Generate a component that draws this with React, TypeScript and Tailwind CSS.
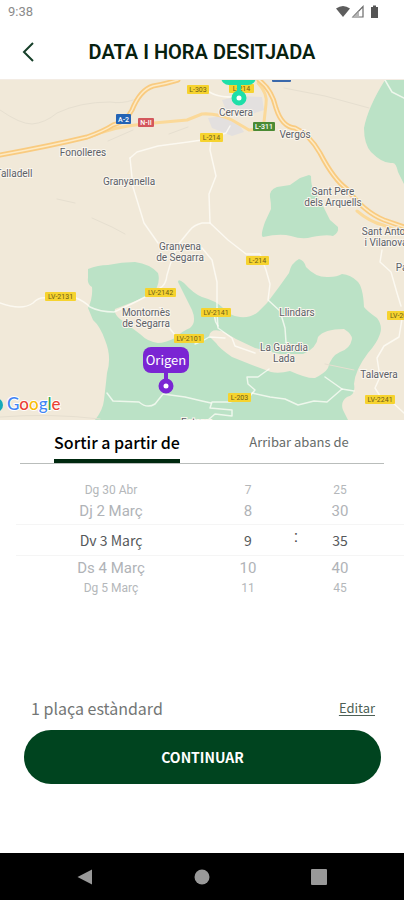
import React, { useState } from 'react';

const forests = [
    'M385 0 Q368 27 364 48 Q364 64 371 72 Q383 84 392 83 Q396 82 398 92 L404 104 V0 Z',
    'M309 95 L300 98 L290 105 L277 107 Q269 110 270 117 Q271 122 271 129 L265 142 Q260 156 263 157 Q280 153 291 156 Q303 160 312 157 Q327 154 333 156 Q339 153 338 147 L330 140 L324 128 L314 110 Q311 107 311 96 Z',
    'M88 189 Q98 185 108 185 Q122 182 135 182 Q150 184 158 193 Q160 200 157 207 Q155 214 147 216 L133 222 L115 229 Q114 234 120 239 L140 254 Q148 262 158 263 Q165 263 175 258 Q184 250 190 248 Q197 242 192 230 L178 202 Q178 198 184 203 Q194 214 202 217 Q216 221 222 227 Q229 236 240 237 Q251 238 258 232 L267 223 L279 207 L289 193 Q291 183 299 179 Q304 180 306 187 Q316 198 329 197 Q337 197 342 194 Q351 195 357 201 Q363 206 364 227 Q367 231 377 238 Q383 246 380 254 Q377 263 368 273 Q355 290 354 304 Q356 315 347 317 Q340 322 343 330 L348 340 H95 Q103 330 104 320 Q106 303 107 293 Q112 277 105 260 Q100 246 93 240 L88 228 Q93 218 92 207 Q87 204 88 198 Z',
];

const clearing =
    'M209 256 Q211 247 224 252 L236 259 L255 268 L280 274 L303 274 Q317 268 318 257 Q324 249 344 249 Q352 254 352 259 Q350 269 340 272 Q331 276 328 288 Q325 293 315 298 Q308 299 290 291 Q279 294 271 292 L252 285 L232 277 Q219 268 216 263 Z';

const minorRoads = [
    'M0 223 Q22 231 33 223 Q39 217 46 218 H76 Q84 221 90 227 Q100 232 114 232 Q132 224 145 217',
    'M160 208 Q166 205 167 195 L170 185 L177 166 L190 150 Q194 145 202 143 L210 143 L209 114 L216 96 L210 70 L211 60',
    'M210 143 L228 160 L246 174 H260 L266 190 L270 204 L268 220 L280 231 L285 248 L286 262',
    'M202 168 L212 180 L217 202 L217 232 L218 248 L232 258 L235 266 L255 273',
    'M217 228 Q212 238 218 246',
    'M175 255 L167 245 M195 264 Q205 260 209 257 L225 258',
    'M269 289 L258 297 L247 297 L248 304 L255 310 L250 316 L230 322 H212 L210 328 L232 330 L232 336 L215 334 L208 340',
    'M252 313 L270 317 L285 319 L298 325 L314 321 L327 322 L342 309 L354 311',
    'M342 309 L325 297 M107 313 L113 321 L139 322 Q147 329 155 324 L163 314 L185 317 L202 321 L211 323',
    'M382 170 L380 182 L391 192 L397 213 L401 226 M402 239 L399 257 L384 266 L377 278 L380 297 L375 308 L380 316 L392 322 L404 333',
    'M130 78 L137 72 L158 66 L188 62 L202 60 L226 53 L230 46',
    'M130 78 L133 107 L144 143 L158 163',
    'M205 8 Q212 17 232 17 M385 0 L392 12 L404 18',
];

const paths = [
    'M0 30 Q20 44 32 44 Q45 43 57 33 Q80 22 110 22 Q122 24 133 20',
    'M57 119 L75 123 M92 138 L112 147 L125 154',
    'M284 8 L325 16 L369 28 M169 54 L188 47',
    'M0 337 Q50 333 100 339 M325 284 L354 290',
    'M108 61 L133 50',
];

const motorways = [
    'M0 75 Q50 66 87 57 Q104 51 113 45 Q126 42 132 30 Q140 10 153 6 Q165 4 178 0',
    'M259 0 Q272 10 276 28 Q282 47 295 48 Q309 54 320 73 Q334 100 347 109 Q364 132 384 140 L404 147',
];

const trunkRoads = [
    'M90 57 Q112 47 143 44 L187 40 L202 34 Q217 33 232 40 L249 50 L264 49',
    'M258 3 Q268 14 266 24 L264 42',
    'M357 131 Q370 142 383 145 L404 153',
];

const roadSigns = [
    { x: 187, y: 5, w: 22, label: 'L-303' },
    { x: 229, y: 4, w: 25, label: 'L-214' },
    { x: 200, y: 53, w: 23, label: 'L-214' },
    { x: 246, y: 176, w: 23, label: 'L-214' },
    { x: 45, y: 212, w: 31, label: 'LV-2131' },
    { x: 145, y: 208, w: 31, label: 'LV-2142' },
    { x: 201, y: 228, w: 30, label: 'LV-2141' },
    { x: 174, y: 254, w: 30, label: 'LV-2101' },
    { x: 387, y: 231, w: 31, label: 'LV-2031' },
    { x: 228, y: 313, w: 23, label: 'L-203' },
    { x: 365, y: 315, w: 30, label: 'LV-2241' },
];

const places = [
    { x: 83, y: 76, lines: ['Fonolleres'] },
    { x: 14, y: 97, lines: ['Talladell'] },
    { x: 129, y: 105, lines: ['Granyanella'] },
    { x: 236, y: 36, lines: ['Cervera'] },
    { x: 295, y: 58, lines: ['Vergós'] },
    { x: 333, y: 115, lines: ['Sant Pere', 'dels Arquells'] },
    { x: 386, y: 155, lines: ['Sant Antolí', 'i Vilanova'] },
    { x: 180, y: 170, lines: ['Granyena', 'de Segarra'] },
    { x: 146, y: 236, lines: ['Montornès', 'de Segarra'] },
    { x: 297, y: 236, lines: ['Llindars'] },
    { x: 284, y: 271, lines: ['La Guàrdia', 'Lada'] },
    { x: 379, y: 298, lines: ['Talavera'] },
    { x: 415, y: 191, lines: ['Pallerols'] },
    { x: 196, y: 346, lines: ['Estany'] },
];

function RouteMap() {
    return (
        <section aria-label="Mapa" className="h-[340px] w-full bg-[#f1e9d9] border-t border-[#f3ece4] box-content overflow-hidden">
            <svg viewBox="0 0 404 340" preserveAspectRatio="xMidYMid slice" className="block w-full h-full" fontFamily="Roboto, sans-serif">
                <rect width="404" height="340" fill="#f1e9d9" />

                {/* Zona urbana */}
                <path d="M222 20 L238 16 L262 17 L264 30 L252 34 L240 30 L226 30 Z M208 38 L222 36 L238 43 L244 52 L232 56 L212 48 Z" fill="#e3e0df" />

                {/* Bosc */}
                {forests.map((d) => <path key={d} d={d} fill="#bbe2c6" />)}
                <path d={clearing} fill="#f1e9d9" />

                {/* Carreteres */}
                <g fill="none" strokeLinecap="round" strokeLinejoin="round">
                    {paths.map((d) => <path key={d} d={d} stroke="#e6dfd0" strokeWidth="1" />)}
                    {minorRoads.map((d) => <path key={d} d={d} stroke="#fffdf8" strokeWidth="1.5" strokeOpacity="0.75" />)}
                    {trunkRoads.map((d) => <path key={d} d={d} stroke="#fbd999" strokeWidth="3" />)}
                    {motorways.map((d) => (
                        <g key={d}>
                            <path d={d} stroke="#f9cb80" strokeWidth="5" />
                            <path d={d} stroke="#fdeac5" strokeWidth="1.5" />
                        </g>
                    ))}
                </g>

                {/* Senyals */}
                <g fontSize="7" textAnchor="middle">
                    {roadSigns.map((s) => (
                        <g key={`${s.x}-${s.y}`}>
                            <rect x={s.x} y={s.y} width={s.w} height="9" rx="1" fill="#f6d32f" />
                            <text x={s.x + s.w / 2} y={s.y + 7} fill="#6d5d18">{s.label}</text>
                        </g>
                    ))}
                    <g fill="#fff" fontWeight="500">
                        <rect x="116" y="34" width="15" height="10" rx="1" fill="#2463b4" />
                        <text x="123.5" y="42">A-2</text>
                        <rect x="138" y="38" width="16" height="9" rx="1" fill="#d3575c" />
                        <text x="146" y="45">N-II</text>
                        <rect x="253" y="42" width="22" height="9" rx="1" fill="#4a8a34" />
                        <text x="264" y="49">L-311</text>
                    </g>
                    <rect x="272" y="-8" width="19" height="10" rx="1" fill="#3a68ab" />
                </g>

                {/* Pobles */}
                <g fontSize="10" fill="#5c6067" stroke="#faf6ee" strokeWidth="2" paintOrder="stroke" textAnchor="middle">
                    {places.map((p) => (
                        <text key={p.lines[0]}>
                            {p.lines.map((line, i) => (
                                <tspan key={line} x={p.x} y={p.y + i * 11}>{line}</tspan>
                            ))}
                        </text>
                    ))}
                </g>

                {/* Destí */}
                <rect x="221" y="-22" width="35" height="27" rx="8" fill="#1ddfa8" />
                <rect x="237" y="3" width="4" height="12" fill="#1ddfa8" />
                <circle cx="239" cy="18" r="5" fill="#fff" stroke="#1ddfa8" strokeWidth="5" />

                {/* Origen */}
                <rect x="143" y="267" width="46" height="26" rx="8" fill="#7a25d3" />
                <path d="M166 292 V300" stroke="#7a25d3" strokeWidth="4" />
                <circle cx="166" cy="306" r="5" fill="#fff" stroke="#7a25d3" strokeWidth="5" />
                <text x="166" y="285" fontSize="13" fill="#fff" textAnchor="middle" fontFamily="'Noto Sans CJK SC', sans-serif">Origen</text>

                <circle cx="-4" cy="325" r="7" fill="#16a9b8" />
                <text x="7" y="330" fontSize="17" fontWeight="500" fontFamily="Lato, sans-serif" stroke="#fff" strokeWidth="2" paintOrder="stroke">
                    <tspan fill="#4285f4">G</tspan>
                    <tspan fill="#ea4335">o</tspan>
                    <tspan fill="#fbbc05">o</tspan>
                    <tspan fill="#4285f4">g</tspan>
                    <tspan fill="#34a853">l</tspan>
                    <tspan fill="#ea4335">e</tspan>
                </text>
            </svg>
        </section>
    );
}

// De la fila de dalt a la de baix, amb la triada al mig
const rowStyles = [
    'h-4 text-xs text-[#b4b7ba]',
    'h-[26px] text-[15px] text-[#b0b3b7]',
    "h-8 text-sm text-[#55585a] border-y border-[#f5f5f5] font-['Noto_Sans_CJK_SC',sans-serif]",
    'h-6 text-[15px] text-[#b0b3b7]',
    'h-4 text-xs text-[#b4b7ba]',
];

function Wheel({ label, options }: { label: string; options: string[] }) {
    const [selected, setSelected] = useState(options[2]);

    return (
        <div role="listbox" aria-label={label} className="flex flex-col items-center">
            {options.map((option, i) => (
                <button
                    key={option}
                    role="option"
                    aria-selected={selected === option}
                    onClick={() => setSelected(option)}
                    className={`flex items-center justify-center w-full whitespace-nowrap ${rowStyles[i]}`}
                >
                    {option}
                </button>
            ))}
        </div>
    );
}

export default function App() {
    const [tab, setTab] = useState('sortir');

    const active = 'text-black text-base font-medium border-[#00290f]';
    const inactive = 'text-[#666b69] text-[13px] border-transparent';

    return (
        <div className="min-h-screen w-full flex flex-col bg-white font-['Noto_Sans_CJK_SC',sans-serif]">
            {/* Barra d'estat */}
            <div className="flex items-center justify-between h-6 pl-2 pr-6 font-[Roboto,sans-serif]">
                <span className="text-[13px] leading-6 text-[#8b8b8b]">9:38</span>
                <svg viewBox="0 0 44 14" className="w-11 h-[14px]" aria-hidden="true">
                    <path d="M0 3.5 Q7 -1.5 14 3.5 L7 12 Z" fill="#5d5d5d" />
                    <path d="M27 1.5 V12 H17 Z" fill="none" stroke="#6a6a6a" strokeWidth="1.2" />
                    <path d="M23 6 V12 H17 Z" fill="#b5b5b5" />
                    <path d="M35 2 H37 V0.5 H40 V2 H42 V13 H35 Z" fill="#555" />
                </svg>
            </div>

            {/* Capçalera */}
            <header className="grid grid-cols-[56px_1fr_56px] items-center h-[55px]">
                <button aria-label="Enrere" className="flex items-center justify-center h-10 w-14">
                    <svg viewBox="0 0 12 20" className="w-3 h-5" fill="none" stroke="#17402a" strokeWidth="2">
                        <path d="M11 1 L2 10 L11 19" />
                    </svg>
                </button>
                <h1 className="text-center text-xl font-semibold text-[#07210f] whitespace-nowrap font-[Roboto,sans-serif]">
                    DATA I HORA DESITJADA
                </h1>
            </header>

            <RouteMap />

            {/* Pestanyes */}
            <div role="tablist" className="mx-5 grid grid-cols-[194px_1fr] justify-items-center border-b border-[#b9bdbb]">
                <button
                    role="tab"
                    aria-selected={tab === 'sortir'}
                    onClick={() => setTab('sortir')}
                    className={`h-[43px] pt-1 border-b-4 whitespace-nowrap ${tab === 'sortir' ? active : inactive}`}
                >
                    Sortir a partir de
                </button>
                <button
                    role="tab"
                    aria-selected={tab === 'arribar'}
                    onClick={() => setTab('arribar')}
                    className={`h-[43px] pt-1 border-b-4 whitespace-nowrap ${tab === 'arribar' ? active : inactive}`}
                >
                    Arribar abans de
                </button>
            </div>

            {/* Selector de data i hora */}
            <div className="mt-[18px] ml-4 grid grid-cols-[190px_84px_12px_76px_1fr] font-[Roboto,sans-serif]">
                <Wheel label="Dia" options={['Dg 30 Abr', 'Dj 2 Març', 'Dv 3 Març', 'Ds 4 Març', 'Dg 5 Març']} />
                <Wheel label="Hora" options={['7', '8', '9', '10', '11']} />
                <span className="mt-[42px] h-8 border-y border-[#f5f5f5] text-center leading-6 text-base text-[#444]">:</span>
                <Wheel label="Minuts" options={['25', '30', '35', '40', '45']} />
                <span className="mt-[42px] h-8 border-y border-[#f5f5f5]" />
            </div>

            <div className="mt-auto">
                <div className="flex items-center justify-between pl-[31px] pr-[29px] h-11">
                    <span className="text-base text-[#737675]">1 plaça estàndard</span>
                    <a href="#editar" className="text-[13px] text-[#4d5f55] underline underline-offset-2">Editar</a>
                </div>
                <button className="block mx-6 w-[calc(100%-47px)] h-[54px] rounded-full bg-[#00441f] text-white text-sm font-bold">
                    CONTINUAR
                </button>
            </div>

            {/* Navegació del sistema */}
            <nav aria-label="Sistema" className="mt-[69px] h-[47px] bg-black flex items-center justify-center gap-[77px]">
                <button aria-label="Enrere" className="w-10 h-10 flex items-center justify-center">
                    <svg viewBox="0 0 16 16" className="w-4 h-4" fill="#999"><path d="M0.5 8 L15 0.5 V15.5 Z" /></svg>
                </button>
                <button aria-label="Inici" className="w-10 h-10 flex items-center justify-center">
                    <svg viewBox="0 0 16 16" className="w-4 h-4" fill="#999"><circle cx="8" cy="8" r="7.5" /></svg>
                </button>
                <button aria-label="Recents" className="w-10 h-10 flex items-center justify-center">
                    <svg viewBox="0 0 16 16" className="w-4 h-4" fill="#999"><rect width="16" height="16" rx="1" /></svg>
                </button>
            </nav>
        </div>
    );
}
